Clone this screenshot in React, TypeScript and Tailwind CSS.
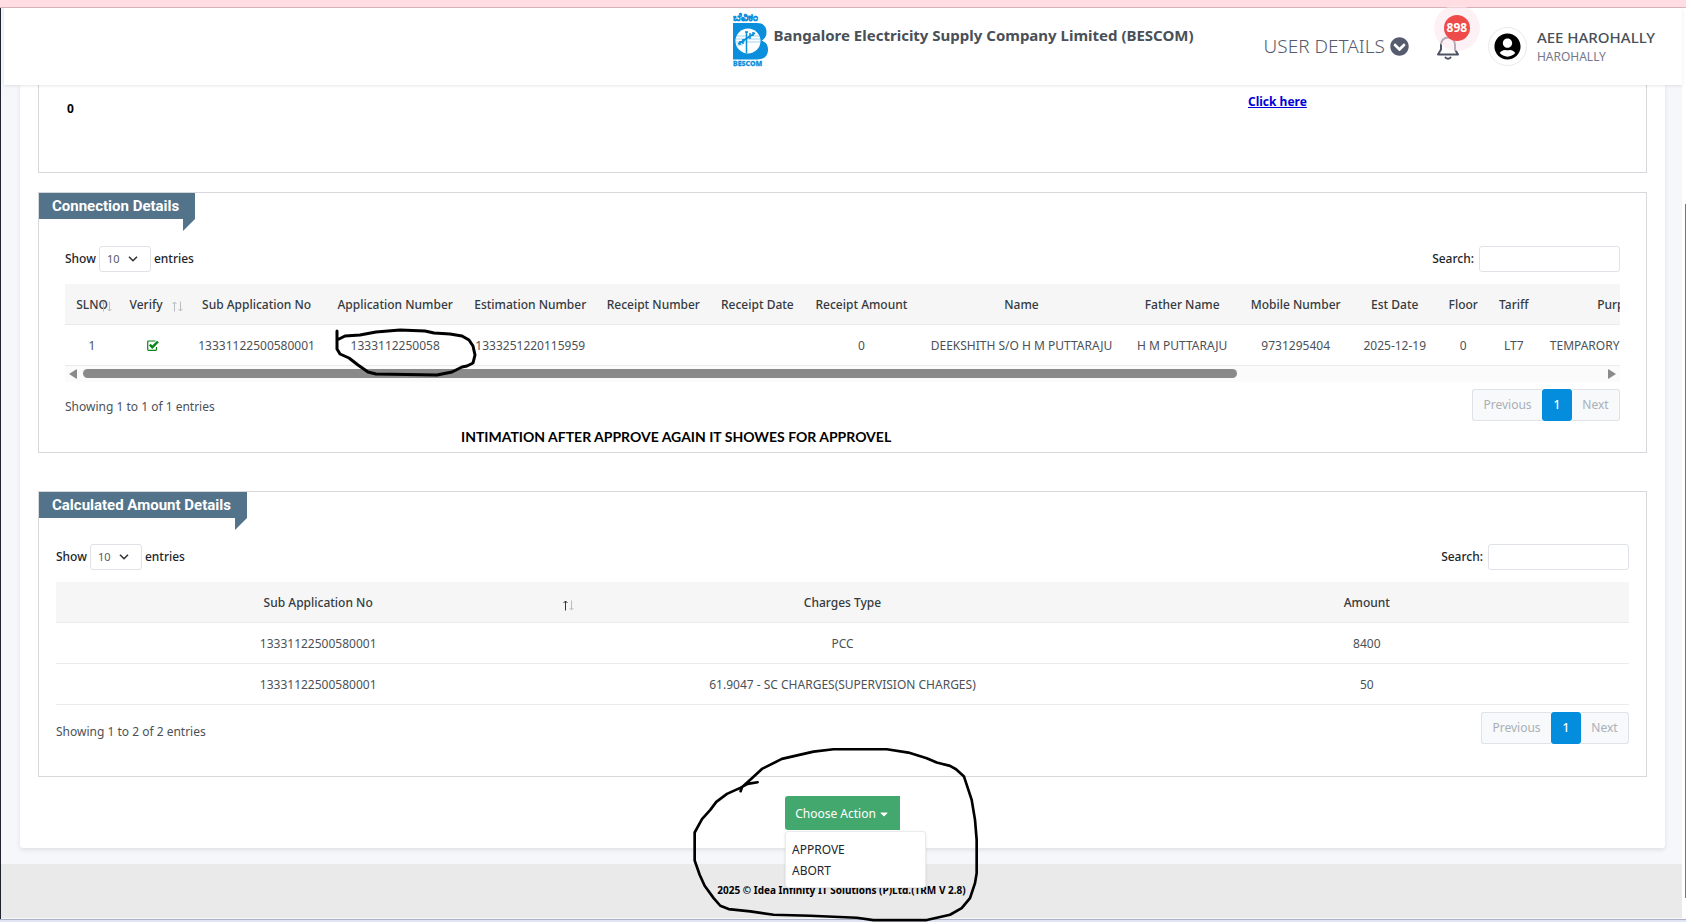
import React from "react";
import { FaCaretDown, FaChevronCircleDown, FaUserCircle } from "react-icons/fa";

const CONNECTION_COLUMNS = [
  { label: "SLNO", width: 54, sort: "overlap" },
  { label: "Verify", width: 68, sort: "idle" },
  { label: "Sub Application No", width: 139 },
  { label: "Application Number", width: 138 },
  { label: "Estimation Number", width: 132 },
  { label: "Receipt Number", width: 114 },
  { label: "Receipt Date", width: 94 },
  { label: "Receipt Amount", width: 114 },
  { label: "Name", width: 206 },
  { label: "Father Name", width: 115 },
  { label: "Mobile Number", width: 112 },
  { label: "Est Date", width: 86 },
  { label: "Floor", width: 51 },
  { label: "Tariff", width: 50 },
  { label: "Purpose", width: 164 },
];

const CONNECTION_ROW = [
  "1",
  "check",
  "13331122500580001",
  "1333112250058",
  "1333251220115959",
  "",
  "",
  "0",
  "DEEKSHITH S/O H M PUTTARAJU",
  "H M PUTTARAJU",
  "9731295404",
  "2025-12-19",
  "0",
  "LT7",
];

const CHARGES = [
  ["13331122500580001", "PCC", "8400"],
  ["13331122500580001", "61.9047 - SC CHARGES(SUPERVISION CHARGES)", "50"],
];

function BescomLogo() {
  return (
    <svg viewBox="0 0 36 51" className="h-[51px] w-9 shrink-0 overflow-visible" role="img" aria-label="BESCOM logo">
      <text x="0" y="6" fontSize="11" fontWeight="700" fill="#0b8fdc" stroke="#0b8fdc" strokeWidth="0.300" fontFamily="Noto Sans, sans-serif">
        ಬೆವಿಕಂ
      </text>
      <path d="M0 8H24C31 8 33.500 12 33.500 17C33.500 21 32 24 28.500 25.500C33 27 35 30 35 34.500C35 41 31 44.500 24 44.500H0Z" fill="#0b8fdc" />
      <circle cx="15" cy="26" r="12.500" fill="#fff" />
      <path d="M13.500 17V38M12 17H15M5 29L22 18M7 26V30M10 24V29M17 18V24M20 17V21M8 28L12 25" stroke="#0b8fdc" strokeWidth="1.500" fill="none" />
      <path d="M4 21H26M3 24H27M3 27H27M4 30H10" stroke="#0b8fdc" strokeWidth="0.400" fill="none" />
      <text x="0" y="51" fontSize="7" fontWeight="800" fill="#0b8fdc" stroke="#0b8fdc" strokeWidth="0.300" fontFamily="Noto Sans, sans-serif">
        BESCOM
      </text>
    </svg>
  );
}

function SortArrows({ active }: { active?: boolean }) {
  return (
    <svg viewBox="0 0 12 11" className="h-[11px] w-3" fill="none" strokeWidth="1" aria-hidden="true">
      <path d="M3.500 10.500V1M1.500 3L3.500 1L5.500 3" stroke={active ? "#333" : "#b9bcc0"} />
      <path d="M9.500 0.500V10M7.500 8L9.500 10L11.500 8" stroke="#b9bcc0" />
    </svg>
  );
}

function CheckIcon() {
  return (
    <svg viewBox="0 0 12 11" className="mx-auto h-[11px] w-3" fill="none" stroke="#0a8417" role="img" aria-label="Verified">
      <path d="M8.500 1H1.700Q0.700 1 0.700 2V9.300Q0.700 10.300 1.700 10.300H8.500Q9.500 10.300 9.500 9.300V7" strokeWidth="1.200" />
      <path d="M2.800 4.700L5.300 7.200L11 1.500" strokeWidth="2.400" />
    </svg>
  );
}

function BellIcon() {
  return (
    <svg viewBox="0 0 28 28" className="size-7" fill="none" stroke="#4d5265" strokeWidth="2" strokeLinejoin="round" aria-hidden="true">
      <path d="M4 21.500H24L21 16.500V11.500C21 7.500 18 4.500 14 4.500C10 4.500 7 7.500 7 11.500V16.500Z" />
      <path d="M11.500 24.500C12 26 16 26 16.500 24.500" strokeLinecap="round" />
    </svg>
  );
}

function Panel({ title, children, className = "" }: { title: string; children: React.ReactNode; className?: string }) {
  return (
    <section className={"relative border border-[#d6d8db] " + className}>
      <h2 className="relative w-fit bg-[#53738a] pr-4 pl-[13px] font-[Roboto,sans-serif] text-[15px] leading-[26px] font-bold text-white">
        {title}
        <svg viewBox="0 0 12 12" className="absolute top-full right-0 size-3" aria-hidden="true">
          <path d="M0 0H12L0 12Z" fill="#53738a" />
        </svg>
      </h2>
      {children}
    </section>
  );
}

function TableControls({ id }: { id: string }) {
  return (
    <div className="flex h-[26px] items-center justify-between text-[12px] font-medium text-[#212529]">
      <div className="flex items-center gap-[3px]">
        <label htmlFor={id + "-length"}>Show</label>
        <span className="relative flex">
          <select
            id={id + "-length"}
            className="h-[26px] w-[52px] appearance-none rounded-[3px] border border-[#dfe3e8] bg-white pl-[7px] text-[11px] font-normal text-[#555b61]"
          >
            <option>10</option>
          </select>
          <svg viewBox="0 0 10 6" className="pointer-events-none absolute top-[10px] right-[13px] h-1.5 w-[10px]" fill="none" stroke="#333" strokeWidth="1.600" aria-hidden="true">
            <path d="M1 0.700L5 4.700L9 0.700" />
          </svg>
        </span>
        <label htmlFor={id + "-length"}>entries</label>
      </div>
      <div className="flex items-center gap-[5px]">
        <label htmlFor={id + "-search"}>Search:</label>
        <input id={id + "-search"} type="search" className="h-[26px] w-[141px] rounded-[3px] border border-[#dfe3e8] bg-white px-2 outline-none" />
      </div>
    </div>
  );
}

function Pagination() {
  return (
    <nav className="flex h-8 text-[12px] text-[#a9b0b7]" aria-label="Pagination">
      <button className="w-[70px] rounded-l-[3px] border border-r-0 border-[#dfe3e8] bg-[#f7f9fb]">Previous</button>
      <button className="w-[30px] rounded-[3px] bg-[#048ddd] font-medium text-white">1</button>
      <button className="w-12 rounded-r-[3px] border border-l-0 border-[#dfe3e8] bg-[#f7f9fb]">Next</button>
    </nav>
  );
}

export default function App() {
  return (
    <div className="flex min-h-screen flex-col bg-[#f6f7fa] font-['Noto_Sans','Open_Sans',sans-serif] text-[#4b5157]">
      <div className="h-2 border-b border-[#d9b3bb] bg-[#ffdde3]" />

      <div className="flex grow border-l border-[#20242e]">
        <div className="flex min-w-0 grow flex-col">
          <header className="relative z-10 ml-[3px] flex h-[77px] justify-end bg-white pr-[27px] shadow-[0_1px_3px_rgba(0,0,0,0.1)]">
            <div className="flex gap-[5px] pt-[7px]">
              <BescomLogo />
              <h1 className="pt-[10px] text-[15px] leading-5 font-bold whitespace-nowrap text-[#495057]">
                Bangalore Electricity Supply Company Limited (BESCOM)
              </h1>
            </div>
            <button className="ml-[70px] flex items-center gap-[5px] text-[19px] font-light whitespace-nowrap text-[#565b6e]">
              USER DETAILS
              <FaChevronCircleDown className="size-[19px]" />
            </button>
            <button className="relative ml-[25px] flex items-center" aria-label="Notifications">
              <BellIcon />
              <span className="absolute top-[-3px] left-0 flex size-[46px] items-center justify-center rounded-full bg-[#fde7ef]/60">
                <span className="flex size-[26px] items-center justify-center rounded-full bg-[#ef4a4a] text-[12px] font-bold text-white">898</span>
              </span>
            </button>
            <button className="ml-[26px] flex items-center gap-[10px] text-left">
              <span className="flex size-[39px] items-center justify-center rounded-full border border-[#e9e9ee]">
                <FaUserCircle className="size-[27px] text-black" />
              </span>
              <span className="flex flex-col whitespace-nowrap">
                <span className="text-[15px] leading-5 font-medium text-[#495057]">AEE HAROHALLY</span>
                <span className="text-[12px] leading-5 text-[#74788d]">HAROHALLY</span>
              </span>
            </button>
          </header>

          <main className="mr-[17px] ml-[19px] flex flex-col rounded-b-[3px] bg-white px-[18px] pb-[18px] shadow-[0_2px_4px_rgba(15,34,58,0.1)]">
            <section className="grid h-[88px] grid-cols-[1181px_1fr] border border-t-0 border-[#d6d8db] pl-7 text-[12px] font-bold">
              <span className="pt-[15px] text-black">0</span>
              <a href="#details" className="pt-2 text-[#0000d8] underline">
                Click here
              </a>
            </section>

            <Panel title="Connection Details" className="mt-[19px] h-[261px]">
              <div className="px-[26px] pt-[27px]">
                <TableControls id="connection" />
                <div className="mt-3 overflow-hidden">
                  <table className="w-[1638px] table-fixed border-collapse text-center text-[12px] whitespace-nowrap">
                    <colgroup>
                      {CONNECTION_COLUMNS.map((c) => (
                        <col key={c.label} style={{ width: c.width }} />
                      ))}
                    </colgroup>
                    <thead className="bg-[#f6f6f6] text-[#343a40]">
                      <tr className="h-10 border-b border-[#e9ebec]">
                        {CONNECTION_COLUMNS.map((c) => (
                          <th key={c.label} scope="col" className="p-0 pt-0.5 font-medium">
                            {c.sort === "overlap" && (
                              <span className="relative">
                                {c.label}
                                <span className="absolute top-[5px] -right-1">
                                  <SortArrows />
                                </span>
                              </span>
                            )}
                            {c.sort === "idle" && (
                              <span className="relative pr-[14px]">
                                {c.label}
                                <span className="absolute top-[5px] -right-1.5">
                                  <SortArrows />
                                </span>
                              </span>
                            )}
                            {!c.sort && c.label}
                          </th>
                        ))}
                      </tr>
                    </thead>
                    <tbody>
                      <tr className="h-[41px] border-b border-[#e9ebec]">
                        {CONNECTION_ROW.map((v, i) => (
                          <td key={i} className="p-0 pt-0.5">
                            {v === "check" ? <CheckIcon /> : v}
                          </td>
                        ))}
                        <td className="p-0 pt-0.5 pl-[11px] text-left">TEMPARORY</td>
                      </tr>
                    </tbody>
                  </table>
                </div>
                <div className="flex h-4 items-center gap-1.5 bg-[#fbfbfb] px-1" aria-hidden="true">
                  <svg viewBox="0 0 8 10" className="h-[10px] w-2" fill="#8a8a8a">
                    <path d="M8 1V9Q8 10 7 9.500L0 5L7 0.500Q8 0 8 1Z" />
                  </svg>
                  <div className="grow">
                    <div className="h-[9px] w-[76%] rounded-full bg-[#8a8a8a]" />
                  </div>
                  <svg viewBox="0 0 8 10" className="h-[10px] w-2" fill="#8a8a8a">
                    <path d="M0 1V9Q0 10 1 9.500L8 5L1 0.500Q0 0 0 1Z" />
                  </svg>
                </div>
                <div className="mt-[7px] flex items-start justify-between">
                  <p className="pt-2 text-[12px] leading-5">Showing 1 to 1 of 1 entries</p>
                  <Pagination />
                </div>
              </div>
              <p className="mt-1.5 ml-[422px] font-[Lato,sans-serif] text-[14px] leading-5 font-bold text-black">
                INTIMATION AFTER APPROVE AGAIN IT SHOWES FOR APPROVEL
              </p>
              <svg viewBox="334 327 144 52" className="pointer-events-none absolute top-[134px] left-[295px] h-[52px] w-36" fill="none" stroke="#000" strokeWidth="3" strokeLinecap="round" strokeLinejoin="round" aria-hidden="true">
                <path d="M337 331L337 349L340 354L349 358L358 365L368 372L376 374L437 375L452 372L462 367L467 366L473 363L475 355L473 346L469 340L462 336L450 334L434 333L425 331L400 330L376 332L360 335L345 336L339 339" />
              </svg>
            </Panel>

            <Panel title="Calculated Amount Details" className="mt-[38px] h-[286px]">
              <div className="px-[17px] pt-[26px]">
                <TableControls id="charges" />
                <table className="mt-3 w-full table-fixed border-collapse text-center text-[12px]">
                  <thead className="bg-[#f6f6f6] text-[#343a40]">
                    <tr className="h-10 border-b border-[#e9ebec]">
                      <th scope="col" className="relative p-0 pt-0.5 font-medium">
                        Sub Application No
                        <span className="absolute top-[18px] right-[6px]">
                          <SortArrows active />
                        </span>
                      </th>
                      <th scope="col" className="p-0 pt-0.5 font-medium">Charges Type</th>
                      <th scope="col" className="p-0 pt-0.5 font-medium">Amount</th>
                    </tr>
                  </thead>
                  <tbody>
                    {CHARGES.map((row) => (
                      <tr key={row[1]} className="h-[41px] border-b border-[#e9ebec]">
                        {row.map((v) => (
                          <td key={v} className="p-0 pt-0.5">{v}</td>
                        ))}
                      </tr>
                    ))}
                  </tbody>
                </table>
                <div className="mt-[7px] flex items-start justify-between">
                  <p className="pt-[10px] text-[12px] leading-5">Showing 1 to 2 of 2 entries</p>
                  <Pagination />
                </div>
              </div>
            </Panel>

            <div className="relative z-20 mt-[19px] w-[115px] self-center">
              <button className="flex h-[34px] w-full items-center justify-center gap-0.5 rounded-l-[3px] bg-[#42a86e] pt-0.5 text-[12px] whitespace-nowrap text-white">
                Choose Action
                <FaCaretDown className="size-3" />
              </button>
              <ul className="absolute top-[35px] left-0 w-[141px] rounded-[3px] border border-[#e9ebec] bg-white pt-[7px] pb-1.5 pl-1.5 text-[12px] leading-[21px] text-[#212529] shadow-sm">
                <li>
                  <button>APPROVE</button>
                </li>
                <li>
                  <button>ABORT</button>
                </li>
              </ul>
              <svg viewBox="92 46 868 530" className="pointer-events-none absolute top-[-51px] left-[-94px] h-[177px] w-[289px] max-w-none" fill="none" stroke="#000" strokeWidth="8" strokeLinecap="round" strokeLinejoin="round" aria-hidden="true">
                <path d="M292 157L262 162L240 174L200 192L168 216L150 240L125 268L103 308L103 392L118 435L133 468L160 505L180 528L205 538L270 545L340 555L450 558L590 564L640 571L800 571L870 555L905 535L930 505L945 460L950 430L950 330L945 270L935 210L912 140L888 118L870 108L830 98L800 85L745 68L680 58L520 58L460 65L365 87L305 117L275 145L245 172L241 184" />
              </svg>
            </div>
          </main>

          <footer className="mt-4 h-[54px] bg-[#eaeaea] pt-4 text-center text-[10px] leading-5 font-bold text-black">
            2025 © Idea Infinity IT Solutions (P)Ltd.(TRM V 2.8)
          </footer>
        </div>

        <div className="flex w-1 shrink-0 flex-col items-end bg-white" aria-hidden="true">
          <div className="mt-[196px] mb-[21px] w-px grow bg-[#777]" />
        </div>
      </div>

      <div className="h-[3px] border-t border-[#aab4c4] bg-[#dfe5f3]" />
    </div>
  );
}
